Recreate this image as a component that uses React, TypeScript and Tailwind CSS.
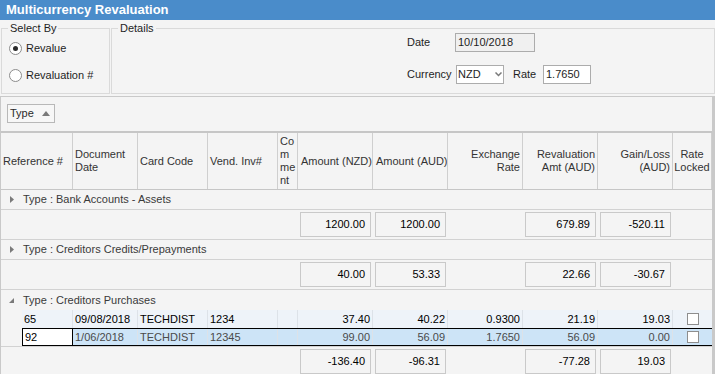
import React from 'react'

type Head = { lines: string[]; align: 'l' | 'r' | 'c' | 'a' }

const heads: Head[] = [
  { lines: ['Reference #'], align: 'l' },
  { lines: ['Document', 'Date'], align: 'l' },
  { lines: ['Card Code'], align: 'l' },
  { lines: ['Vend. Inv#'], align: 'l' },
  { lines: ['Co', 'm', 'me', 'nt'], align: 'l' },
  { lines: ['Amount (NZD)'], align: 'a' },
  { lines: ['Amount (AUD)'], align: 'a' },
  { lines: ['Exchange', 'Rate'], align: 'r' },
  { lines: ['Revaluation', 'Amt (AUD)'], align: 'r' },
  { lines: ['Gain/Loss', '(AUD)'], align: 'r' },
  { lines: ['Rate', 'Locked'], align: 'c' },
]

const alignCls = {
  l: 'text-left pl-[2px]',
  a: 'text-left pl-[3px]',
  r: 'text-right pr-[2px]',
  c: 'text-center',
}

type Row = {
  ref: string
  date: string
  card: string
  inv: string
  nzd: string
  aud: string
  rate: string
  reval: string
  gain: string
}

const rows: Row[] = [
  { ref: '65', date: '09/08/2018', card: 'TECHDIST', inv: '1234', nzd: '37.40', aud: '40.22', rate: '0.9300', reval: '21.19', gain: '19.03' },
  { ref: '92', date: '1/06/2018', card: 'TECHDIST', inv: '12345', nzd: '99.00', aud: '56.09', rate: '1.7650', reval: '56.09', gain: '0.00' },
]

const Radio = ({ checked, label }: { checked?: boolean; label: string }) => (
  <div className="flex h-[18px] items-center">
    <div className="ml-[7px] flex h-[13px] w-[13px] items-center justify-center rounded-full border border-[#8c8c8c] bg-white">
      {checked && <div className="h-[5px] w-[5px] rounded-full bg-[#2b2b2b]" />}
    </div>
    <span className="ml-[4px] text-[#1e1e1e]">{label}</span>
  </div>
)

const GroupRow = ({ label, open, line = true }: { label: string; open?: boolean; line?: boolean }) => (
  <div className={`flex h-[20px] items-center text-[#3a3a3a] ${line ? 'border-b border-[#d2d2d2]' : ''}`}>
    <div className="ml-[8px] flex w-[6px] items-center">
      {open ? (
        <svg width="5" height="5" viewBox="0 0 5 5">
          <polygon points="5,0 5,5 0,5" fill="#7a7a7a" />
        </svg>
      ) : (
        <svg width="4" height="7" viewBox="0 0 4 7" className="ml-[1px]">
          <polygon points="0,0 4,3.5 0,7" fill="#7a7a7a" />
        </svg>
      )}
    </div>
    <span className="ml-[8px]">{label}</span>
  </div>
)

const SumBox = ({ v }: { v?: string }) =>
  v ? (
    <div className="px-[2px] pt-[2px]">
      <div className="flex h-[25px] items-center justify-end border border-[#c9c9c9] pr-[5px] text-black">{v}</div>
    </div>
  ) : (
    <div />
  )

const SummaryRow = ({ vals, line = true }: { vals: string[]; line?: boolean }) => (
  <div
    className={`grid h-[30px] grid-cols-[72px_65px_70px_70px_20px_75px_75px_75px_75px_75px_39px] ${line ? 'border-b border-[#d2d2d2]' : ''}`}
  >
    <div className="col-span-5" />
    <SumBox v={vals[0]} />
    <SumBox v={vals[1]} />
    <div />
    <SumBox v={vals[2]} />
    <SumBox v={vals[3]} />
    <div />
  </div>
)

const Cell = ({ v, right, first }: { v: string; right?: boolean; first?: boolean }) => (
  <div
    className={`flex items-center overflow-hidden whitespace-nowrap px-[2px] ${right ? 'justify-end' : ''} ${
      first ? 'border-x border-black bg-white text-black' : 'border-r border-[#dde2e8]'
    }`}
  >
    {v}
  </div>
)

const DataRow = ({ r, selected }: { r: Row; selected?: boolean }) => (
  <div className="flex">
    <div className="w-[21px]" />
    <div
      className={`grid grid-cols-[51px_65px_70px_70px_20px_75px_75px_75px_75px_75px_39px] ${
        selected ? 'h-[18px] border-y border-black bg-[#cde4f7] text-[#4a4a4a]' : 'h-[18px] bg-[#eef3f9] text-black'
      }`}
    >
      <Cell v={r.ref} first={selected} />
      <Cell v={r.date} />
      <Cell v={r.card} />
      <Cell v={r.inv} />
      <Cell v="" />
      <Cell v={r.nzd} right />
      <Cell v={r.aud} right />
      <Cell v={r.rate} right />
      <Cell v={r.reval} right />
      <Cell v={r.gain} right />
      <div className="flex items-center pl-[14px]">
        <div className="h-[12px] w-[12px] border border-[#8e8e8e] bg-white" />
      </div>
    </div>
  </div>
)

export default function App() {
  return (
    <div className="h-[374px] w-[715px] overflow-hidden bg-[#f4f4f4] font-['Liberation_Sans',Arial,sans-serif] text-[11px] text-[#1e1e1e]">
      <div className="h-[20px] bg-[#4a8cca] pl-[6px] text-[13px] font-bold leading-[20px] text-white">
        Multicurrency Revaluation
      </div>

      <div className="flex h-[76px]">
        <fieldset className="ml-[1px] mt-[1px] h-[73px] w-[109px] border border-[#dadada]">
          <legend className="ml-[6px] px-[2px] leading-[14px]">Select By</legend>
          <div className="mt-[4px] flex flex-col gap-[9px]">
            <Radio checked label="Revalue" />
            <Radio label="Revaluation #" />
          </div>
        </fieldset>
        <fieldset className="ml-[1px] mt-[1px] h-[73px] w-[604px] border border-[#dadada]">
          <legend className="ml-[6px] px-[2px] leading-[14px]">Details</legend>
          <div className="-mt-[2px] flex flex-col pl-[295px]">
            <div className="flex h-[19px] items-center">
              <span className="w-[48px]">Date</span>
              <div className="flex h-[19px] w-[80px] items-center border border-[#acacac] bg-[#f0f0f0] pl-[2px]">
                10/10/2018
              </div>
            </div>
            <div className="mt-[13px] flex h-[19px] items-center">
              <span className="w-[49px]">Currency</span>
              <div className="flex h-[19px] w-[48px] items-center border border-[#acacac] bg-white pl-[1px]">
                <span className="text-[#1e1e1e]">NZD</span>
                <svg width="7" height="5" viewBox="0 0 7 5" className="ml-[14px]">
                  <polyline points="0.5,0.5 3.5,3.5 6.5,0.5" fill="none" stroke="#7a7a7a" strokeWidth="1.5" />
                </svg>
              </div>
              <span className="ml-[9px] w-[30px]">Rate</span>
              <div className="flex h-[19px] w-[48px] items-center border border-[#acacac] bg-white pl-[2px]">
                1.7650
              </div>
            </div>
          </div>
        </fieldset>
      </div>

      <div className="border-l border-r-[3px] border-t border-[#c9c9c9]">
        <div className="h-[34px] pl-[6px] pt-[7px]">
          <div className="flex h-[19px] w-[48px] items-center border border-[#b8b8b8] bg-[#f7f7f7] pl-[2px] text-[#2a2a2a]">
            Type
            <svg width="8" height="5" viewBox="0 0 8 5" className="ml-[8px]">
              <polygon points="0,5 4,0 8,5" fill="#7a7a7a" />
            </svg>
          </div>
        </div>

        <div className="grid h-[59px] grid-cols-[72px_65px_70px_70px_20px_75px_75px_75px_75px_75px_39px] border-b border-t-2 border-[#c6c6c6] leading-[13px] text-[#333]">
          {heads.map((h, i) => (
            <div key={i} className={`flex items-center overflow-hidden border-r border-[#cfcfcf] ${alignCls[h.align]}`}>
              <div className="w-full whitespace-nowrap">
                {h.lines.map((l, j) => (
                  <div key={j}>{l}</div>
                ))}
              </div>
            </div>
          ))}
        </div>

        <GroupRow label="Type : Bank Accounts - Assets" />
        <SummaryRow vals={['1200.00', '1200.00', '679.89', '-520.11']} />
        <GroupRow label="Type : Creditors Credits/Prepayments" />
        <SummaryRow vals={['40.00', '53.33', '22.66', '-30.67']} />
        <GroupRow label="Type : Creditors Purchases" open line={false} />
        <div className="border-b border-[#d2d2d2]">
          <DataRow r={rows[0]} />
          <DataRow r={rows[1]} selected />
        </div>
        <SummaryRow vals={['-136.40', '-96.31', '-77.28', '19.03']} line={false} />
      </div>
    </div>
  )
}
